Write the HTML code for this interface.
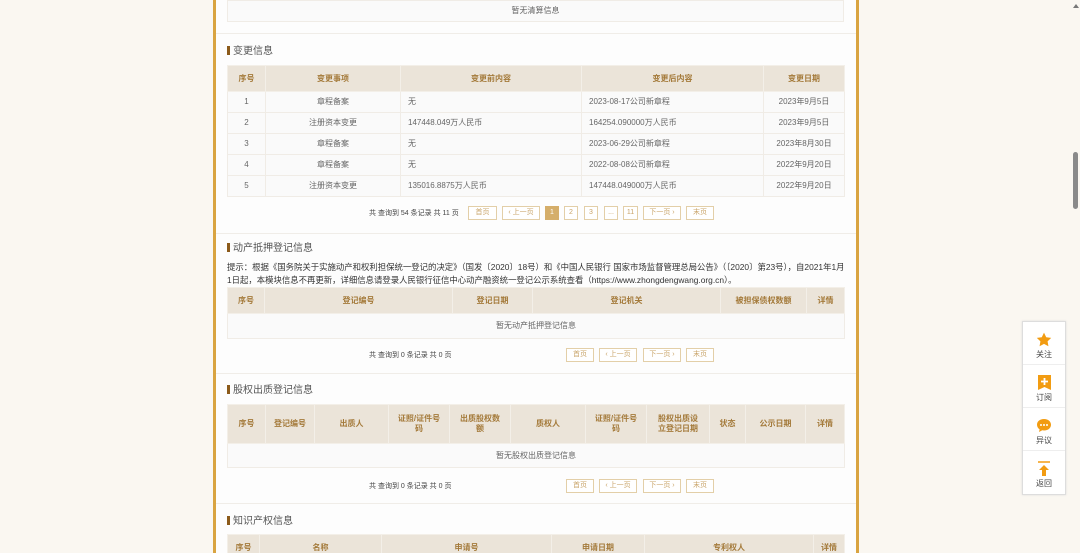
<!DOCTYPE html>
<html><head><meta charset="utf-8"><style>
*{margin:0;padding:0;box-sizing:border-box}
html,body{width:1080px;height:553px;overflow:hidden}
body{background:#faf7f1;font-family:"Liberation Sans","Noto Sans CJK SC",sans-serif;color:#666;font-size:8px;position:relative}
.panel{position:absolute;left:213px;top:0;width:646px;height:553px;background:#fdfdfd;border-left:3px solid #d9a441;border-right:3px solid #d9a441}
.abs{position:absolute}
table{position:absolute;left:227px;width:617px;border-collapse:collapse;table-layout:fixed}
td,th{border:1px solid #f0ece6;text-align:center;font-size:8px;line-height:10px;padding:0}
th{background:#ebe4d9;color:#a47a3a;font-weight:bold;border-color:#f3efe8}
td{background:#fafafa;color:#666}
td.l{text-align:left;padding-left:7px}
.title{position:absolute;left:227px;font-size:10px;color:#555;line-height:12px}
.title:before{content:"";display:inline-block;width:3px;height:9px;background:#8b5a1a;margin-right:3px;vertical-align:-1px}
.sep{position:absolute;left:216px;width:640px;height:1px;background:#f0ede8}
.pg{position:absolute;height:14px;border:1px solid #e3cfa8;color:#c9a46a;font-size:7px;line-height:12px;text-align:center;background:#fff}
.pg.on{background:#d5ae6a;color:#fff;border-color:#d5ae6a}
.cnt{position:absolute;font-size:7px;color:#444;line-height:10px}
.side{position:absolute;left:1022px;top:321px;width:44px;height:174px;background:#fff;border:1px solid #ddd;box-shadow:0 0 2px #ddd}
.side div{height:43px;border-bottom:1px solid #eee;text-align:center;font-size:8px;color:#444;padding-top:10px}
.side div:last-child{border:0}
.side svg{display:block;margin:0 auto 2px}
</style></head><body>
<div class="panel"></div>

<table style="top:0"><tr><td style="height:21px">暂无清算信息</td></tr></table>
<div class="sep" style="top:33px"></div>

<div class="title" style="top:46px">变更信息</div>
<table style="top:65px">
<colgroup><col style="width:38px"><col style="width:135px"><col style="width:181px"><col style="width:182px"><col style="width:81px"></colgroup>
<tr><th style="height:26px">序号</th><th>变更事项</th><th>变更前内容</th><th>变更后内容</th><th>变更日期</th></tr>
<tr><td style="height:21px">1</td><td>章程备案</td><td class="l">无</td><td class="l">2023-08-17公司新章程</td><td>2023年9月5日</td></tr>
<tr><td style="height:21px">2</td><td>注册资本变更</td><td class="l">147448.049万人民币</td><td class="l">164254.090000万人民币</td><td>2023年9月5日</td></tr>
<tr><td style="height:21px">3</td><td>章程备案</td><td class="l">无</td><td class="l">2023-06-29公司新章程</td><td>2023年8月30日</td></tr>
<tr><td style="height:21px">4</td><td>章程备案</td><td class="l">无</td><td class="l">2022-08-08公司新章程</td><td>2022年9月20日</td></tr>
<tr><td style="height:21px">5</td><td>注册资本变更</td><td class="l">135016.8875万人民币</td><td class="l">147448.049000万人民币</td><td>2022年9月20日</td></tr>
</table>
<div class="cnt" style="left:369px;top:209px">共 查询到 54 条记录 共 11 页</div>
<div class="pg" style="left:468px;top:206px;width:29px">首页</div>
<div class="pg" style="left:502px;top:206px;width:38px">‹ 上一页</div>
<div class="pg on" style="left:545px;top:206px;width:14px">1</div>
<div class="pg" style="left:564px;top:206px;width:14px">2</div>
<div class="pg" style="left:584px;top:206px;width:14px">3</div>
<div class="pg" style="left:604px;top:206px;width:14px">...</div>
<div class="pg" style="left:623px;top:206px;width:15px">11</div>
<div class="pg" style="left:643px;top:206px;width:38px">下一页 ›</div>
<div class="pg" style="left:686px;top:206px;width:28px">末页</div>
<div class="sep" style="top:233px"></div>

<div class="title" style="top:243px">动产抵押登记信息</div>
<div class="abs" style="left:227px;top:261px;width:620px;font-size:8.4px;line-height:13px;color:#333">提示：根据《国务院关于实施动产和权利担保统一登记的决定》（国发〔2020〕18号）和《中国人民银行 国家市场监督管理总局公告》（〔2020〕第23号），自2021年1月1日起，本模块信息不再更新，详细信息请登录人民银行征信中心动产融资统一登记公示系统查看（https://www.zhongdengwang.org.cn）。</div>
<table style="top:287px">
<colgroup><col style="width:37px"><col style="width:188px"><col style="width:80px"><col style="width:188px"><col style="width:86px"><col style="width:38px"></colgroup>
<tr><th style="height:26px">序号</th><th>登记编号</th><th>登记日期</th><th>登记机关</th><th>被担保债权数额</th><th>详情</th></tr>
<tr><td colspan="6" style="height:25px">暂无动产抵押登记信息</td></tr>
</table>
<div class="cnt" style="left:369px;top:351px">共 查询到 0 条记录 共 0 页</div>
<div class="pg" style="left:566px;top:348px;width:28px">首页</div>
<div class="pg" style="left:599px;top:348px;width:38px">‹ 上一页</div>
<div class="pg" style="left:643px;top:348px;width:38px">下一页 ›</div>
<div class="pg" style="left:686px;top:348px;width:28px">末页</div>
<div class="sep" style="top:373px"></div>

<div class="title" style="top:385px">股权出质登记信息</div>
<table style="top:404px">
<colgroup><col style="width:38px"><col style="width:49px"><col style="width:74px"><col style="width:61px"><col style="width:61px"><col style="width:75px"><col style="width:61px"><col style="width:63px"><col style="width:36px"><col style="width:60px"><col style="width:39px"></colgroup>
<tr><th style="height:39px">序号</th><th>登记编号</th><th>出质人</th><th>证照/证件号<br>码</th><th>出质股权数<br>额</th><th>质权人</th><th>证照/证件号<br>码</th><th>股权出质设<br>立登记日期</th><th>状态</th><th>公示日期</th><th>详情</th></tr>
<tr><td colspan="11" style="height:24px">暂无股权出质登记信息</td></tr>
</table>
<div class="cnt" style="left:369px;top:482px">共 查询到 0 条记录 共 0 页</div>
<div class="pg" style="left:566px;top:479px;width:28px">首页</div>
<div class="pg" style="left:599px;top:479px;width:38px">‹ 上一页</div>
<div class="pg" style="left:643px;top:479px;width:38px">下一页 ›</div>
<div class="pg" style="left:686px;top:479px;width:28px">末页</div>
<div class="sep" style="top:503px"></div>

<div class="title" style="top:516px">知识产权信息</div>
<table style="top:534px">
<colgroup><col style="width:32px"><col style="width:122px"><col style="width:170px"><col style="width:93px"><col style="width:169px"><col style="width:31px"></colgroup>
<tr><th style="height:26px">序号</th><th>名称</th><th>申请号</th><th>申请日期</th><th>专利权人</th><th>详情</th></tr>
</table>

<div class="side">
<div><svg width="16" height="15" viewBox="0 0 24 23"><path d="M12 1l3.4 7 7.6 1-5.5 5.3 1.3 7.6L12 18.3 5.2 21.9l1.3-7.6L1 9l7.6-1z" fill="#f29c12"/></svg>关注</div>
<div><svg width="13" height="15" viewBox="0 0 13 15"><path d="M0 0h13v15l-6.5-3L0 15z" fill="#f29c12"/><path d="M6.5 3v7M3 6.5h7" stroke="#fff" stroke-width="1.8"/></svg>订阅</div>
<div><svg width="16" height="15" viewBox="0 0 16 15"><path d="M8 1C3.6 1 1 3.6 1 6.8c0 2 1 3.6 2.6 4.6L3 14l3.3-1.7c.6.1 1.1.2 1.7.2 4.4 0 7-2.6 7-5.7S12.4 1 8 1z" fill="#f29c12"/><circle cx="5" cy="7" r="1" fill="#fff"/><circle cx="8" cy="7" r="1" fill="#fff"/><circle cx="11" cy="7" r="1" fill="#fff"/></svg>异议</div>
<div><svg width="14" height="15" viewBox="0 0 14 15"><path d="M1 1h12" stroke="#f29c12" stroke-width="1.5"/><path d="M7 4l5 5H9v6H5V9H2z" fill="#f29c12"/></svg>返回</div>
</div>

<div class="abs" style="left:1071px;top:0;width:9px;height:553px;background:#faf7f1"></div>
<div class="abs" style="left:1073px;top:4px;width:0;height:0;border-left:3px solid transparent;border-right:3px solid transparent;border-bottom:4px solid #777"></div>
<div class="abs" style="left:1073px;top:152px;width:5px;height:57px;background:#8a8a8a;border-radius:3px"></div>
</body></html>
